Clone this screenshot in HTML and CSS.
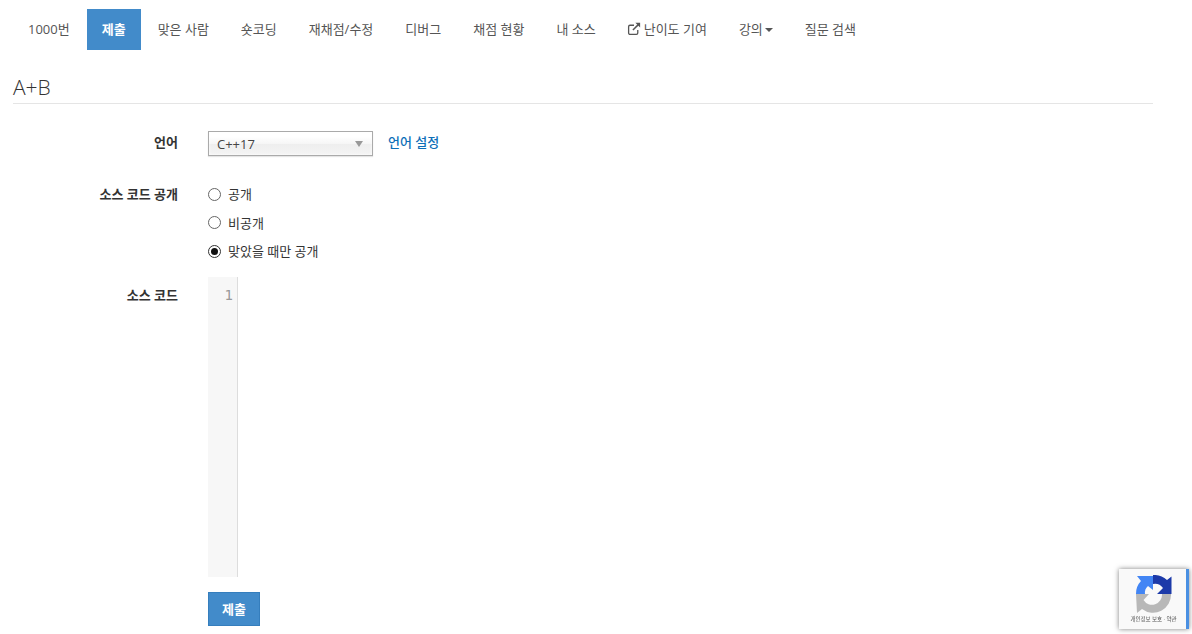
FILE: index.html
```html
<!DOCTYPE html>
<html lang="ko">
<head>
<meta charset="utf-8">
<title>A+B</title>
<link rel="stylesheet" href="styles.css">
</head>
<body>
<main class="page">
  <nav class="tabs">
    <a class="tab">1000번</a>
    <a class="tab active">제출</a>
    <a class="tab">맞은 사람</a>
    <a class="tab">숏코딩</a>
    <a class="tab">재채점/수정</a>
    <a class="tab">디버그</a>
    <a class="tab">채점 현황</a>
    <a class="tab">내 소스</a>
    <a class="tab"><svg class="ext" viewBox="0 0 13 13" width="14" height="14"><path d="M10 7.500v2.700A1.300 1.300 0 0 1 8.700 11.500H2.800A1.300 1.300 0 0 1 1.500 10.200V4.300A1.300 1.300 0 0 1 2.800 3H6.500" fill="none" stroke="#555" stroke-width="1.200"/><path d="M5.500 7.500 11 2" fill="none" stroke="#555" stroke-width="1.400"/><path d="M7.800 .8H12.200V5.200Z" fill="#555"/></svg>난이도 기여</a>
    <a class="tab">강의<span class="caret"></span></a>
    <a class="tab">질문 검색</a>
  </nav>
  <h1 class="title">A+B</h1>
  <form class="form">
    <div class="row row-lang">
      <div class="label">언어</div>
      <div class="select"><span>C++17</span><i class="select-arrow"></i></div>
      <a class="setting">언어 설정</a>
    </div>
    <div class="row row-public">
      <div class="label">소스 코드 공개</div>
      <div class="radios">
        <label class="radio"><span class="dot"></span>공개</label>
        <label class="radio"><span class="dot"></span>비공개</label>
        <label class="radio"><span class="dot on"></span>맞았을 때만 공개</label>
      </div>
    </div>
    <div class="row row-code">
      <div class="label">소스 코드</div>
      <div class="editor"><div class="gutter">1</div></div>
    </div>
    <div class="row row-submit">
      <div class="label"></div>
      <button type="button" class="submit">제출</button>
    </div>
  </form>
</main>
<aside class="badge">
  <svg class="logo" viewBox="0 0 38 38" width="38" height="38">
    <path d="M18 0A19 19 0 0 1 32 5L36.500 1.500V19H22L28 13A10 10 0 0 0 18 9Z" fill="#1c3aa9"/>
    <path d="M1 19A18 18 0 0 1 6 6L2 1H18V15L13 11A9 9 0 0 0 10 19Z" fill="#4285f4"/>
    <path d="M1 19H14L8.500 25A10 10 0 0 0 27 19H36A18 18 0 0 1 7 34L2 38Z" fill="#b8b8b8"/>
  </svg>
  <div class="badge-text">개인정보 보호 · 약관</div>
</aside>
</body>
</html>
```

FILE: styles.css
```css
* { box-sizing: border-box; }
html, body { margin: 0; height: 100%; overflow: hidden; background: #fff; }
body {
  font-family: "Open Sans", "Noto Sans CJK KR", sans-serif;
  font-size: 13px;
  line-height: 20px;
  color: #333;
}
.page { width: 1140px; margin-left: 13px; padding-top: 9px; }
.tabs { display: flex; gap: 2px; height: 41px; }
.tab {
  display: flex;
  align-items: center;
  padding: 0 15px 1px;
  height: 41px;
  color: #555;
  white-space: pre;
}
.tab.active { background: #428bca; color: #fff; font-weight: 600; }
.ext { margin-right: 3px; margin-left: -1px; }
.caret {
  width: 0; height: 0; margin-left: 2px; margin-top: 2px;
  border-left: 4px solid transparent;
  border-right: 4px solid transparent;
  border-top: 4px solid #555;
}
.title {
  margin: 24px 0 0;
  height: 30px;
  font-size: 21px;
  line-height: 26px;
  font-weight: 300;
  color: #333;
  border-bottom: 1px solid #e5e5e5;
}
.row { display: flex; }
.label { width: 165px; font-weight: 700; text-align: right; color: #333; flex: none; margin-right: 30px; }
.row-lang { margin-top: 27px; height: 25px; }
.row-lang .label { line-height: 22px; }
.select {
  width: 165px; height: 25px;
  border: 1px solid #aaa;
  padding: 0 9px 0 8px;
  display: flex; justify-content: space-between; align-items: center;
  background: linear-gradient(to bottom, #fff 20%, #f6f6f6 50%, #eee 52%, #f4f4f4 100%);
  box-shadow: 0 0 3px #fff inset, 0 1px 1px rgba(0,0,0,.1);
  color: #444;
}
.select-arrow {
  width: 0; height: 0; margin-top: 0;
  border-left: 4px solid transparent;
  border-right: 4px solid transparent;
  border-top: 6px solid #999;
}
.setting { margin-left: 15px; color: #0d6fb8; font-weight: 500; line-height: 22px; }
.row-public { margin-top: 28px; height: 88px; }
.row-public .label { line-height: 20px; }
.radios { display: flex; flex-direction: column; gap: 8.500px; }
.radio { display: flex; align-items: center; color: #333; height: 20px; }
.dot {
  width: 13px; height: 13px; margin-right: 7px;
  border: 1px solid #666; border-radius: 50%; background: #fff;
  position: relative;
  flex: none;
}
.dot.on { border-color: #333; }
.dot.on::after {
  content: ""; position: absolute; left: 2px; top: 2px;
  width: 7px; height: 7px; border-radius: 50%; background: #111;
}
.row-code { margin-top: 5px; height: 300px; }
.row-code .label { line-height: 36px; }
.editor { flex: 1; height: 300px; }
.gutter {
  width: 30px; height: 300px;
  background: #f7f7f7;
  border-right: 1px solid #ddd;
  padding: 8px 4px 0 0;
  text-align: right;
  font-family: "DejaVu Sans Mono", monospace;
  font-size: 14px;
  line-height: 20px;
  color: #999;
}
.row-submit { margin-top: 15px; }
.submit {
  width: 52px; height: 34px;
  background: #428bca;
  border: 1px solid #357ebd;
  color: #fff;
  font: 600 13px/20px "Open Sans", "Noto Sans CJK KR", sans-serif;
  padding: 0;
}
.badge {
  position: fixed;
  left: 1119px; top: 569px;
  width: 70px; height: 60px;
  background: #f9f9f9;
  border-right: 3px solid #4a90e2;
  box-shadow: 0 0 5px rgba(0,0,0,.5);
  display: flex; flex-direction: column; align-items: center;
  padding: 6px 0 0 2px;
}
.logo { display: block; flex: none; }
.badge-text { font-size: 5.500px; line-height: 8px; margin-top: 2px; color: #555; white-space: nowrap; }
```
